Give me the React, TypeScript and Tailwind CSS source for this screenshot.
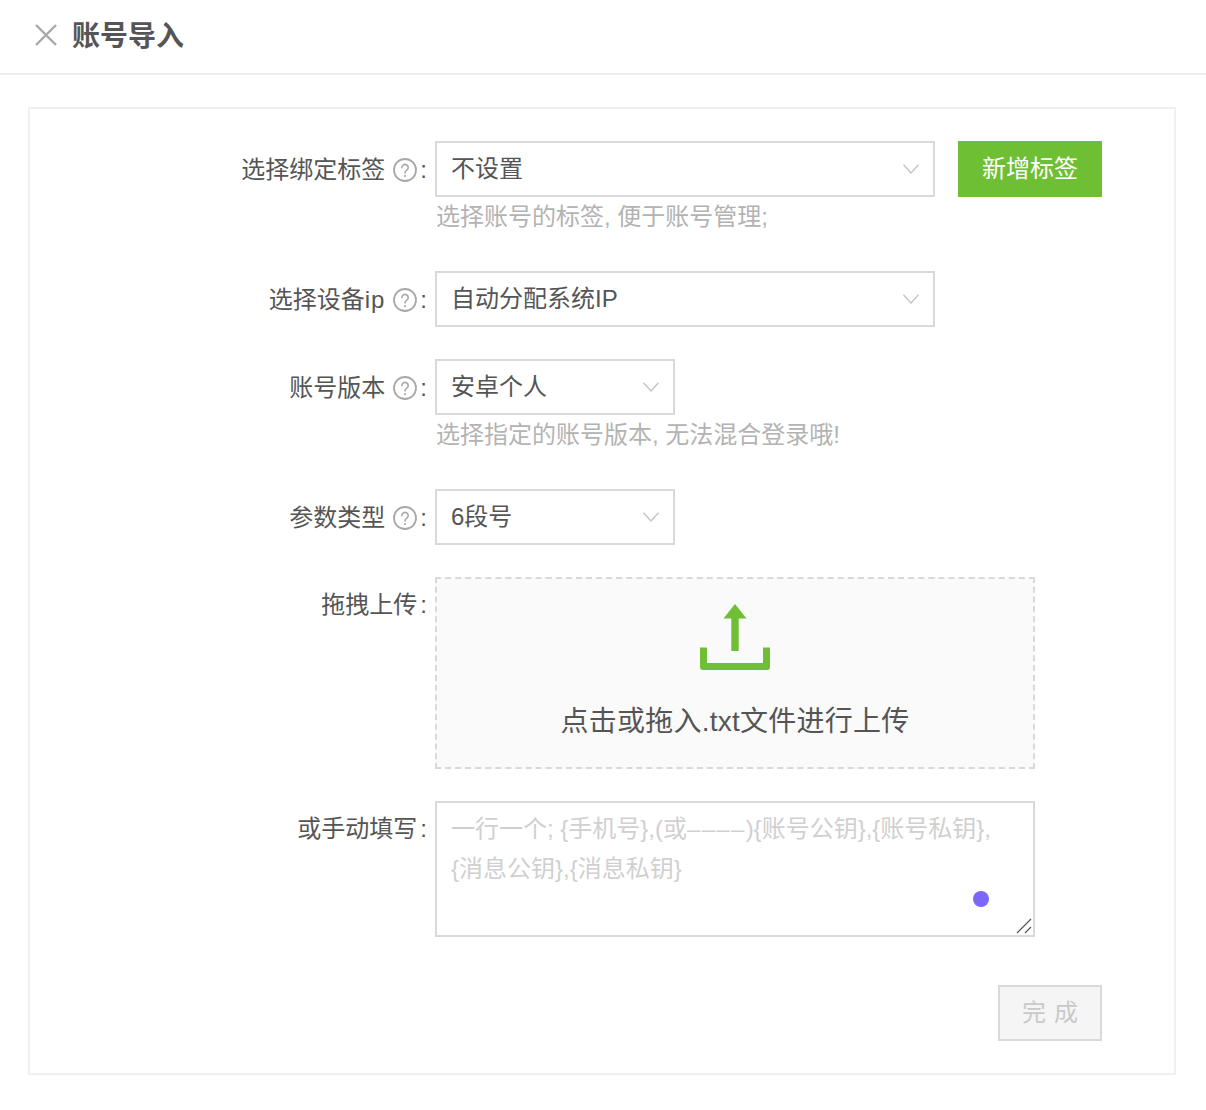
import { ReactNode } from "react"

const font = "[font-family:'Liberation_Sans','Noto_Sans_CJK_SC',sans-serif]"

function HelpIcon() {
  return (
    <svg className="ml-[8px] h-6 w-6" viewBox="0 0 24 24" fill="none">
      <circle cx="12" cy="12" r="11" stroke="#a8a8a8" strokeWidth="1.800" />
      <path d="M8.800 9.600a3.200 3.200 0 1 1 5 2.600c-1.100.8-1.800 1.300-1.800 2.800" stroke="#a8a8a8" strokeWidth="1.600" strokeLinecap="round" />
      <circle cx="12" cy="18" r="1.100" fill="#a8a8a8" />
    </svg>
  )
}

function Chevron() {
  return (
    <svg className="h-[10px] w-4" viewBox="0 0 16 10" fill="none">
      <path d="M.5.7 8 9l7.500-8.300" stroke="#c4c4c4" strokeWidth="1.400" />
    </svg>
  )
}

function Row({ label, help, children, className }: { label: ReactNode; help?: boolean; children: ReactNode; className: string }) {
  return (
    <div className={`flex ${className}`}>
      <div className={`flex h-14 w-[397px] shrink-0 items-center justify-end text-[24px] text-[#555555] ${help ? "pt-[1px]" : "pb-[1px]"}`}>
        <span>{label}</span>
        {help && <HelpIcon />}
        <span className="ml-[3px] leading-none">:</span>
      </div>
      <div className="ml-[8px]">{children}</div>
    </div>
  )
}

function Select({ value, wide }: { value: string; wide?: boolean }) {
  return (
    <div className={`flex h-14 items-center justify-between border-2 border-[#d9d9d9] bg-white px-[14px] text-[24px] text-[#555555] ${wide ? "w-[500px]" : "w-[240px]"}`}>
      <span>{value}</span>
      <Chevron />
    </div>
  )
}

function Hint({ children }: { children: ReactNode }) {
  return <p className="h-[34px] pt-[2px] pl-px text-[24px] leading-[36px] text-[#b3b3b3]">{children}</p>
}

export default function App() {
  return (
    <div className={`h-[1110px] w-[1206px] overflow-hidden bg-white ${font}`}>
      {/* Header */}
      <div className="flex h-[75px] items-center border-b-2 border-[#eeeeee] pb-[4px] pl-[35px]">
        <svg className="h-[22px] w-[22px]" viewBox="0 0 22 22" fill="none">
          <path d="M1 1l20 20M21 1 1 21" stroke="#a8a8a8" strokeWidth="2.400" />
        </svg>
        <h1 className="ml-[15px] pt-[4px] text-[28px] font-bold text-[#555555]">账号导入</h1>
      </div>

      {/* Form panel */}
      <div className="mt-[32px] ml-[28px] h-[968px] w-[1148px] border-2 border-[#f0f0f0] pt-[32px]">
        <Row label="选择绑定标签" help className="mb-[40px]">
          <div className="flex">
            <Select value="不设置" wide />
            <button className="ml-[23px] h-14 w-[144px] bg-[#6fbf35] text-[24px] text-white">新增标签</button>
          </div>
          <Hint>选择账号的标签, 便于账号管理;</Hint>
        </Row>

        <Row label={<>选择设备<span className="tracking-[1px]">ip</span></>} help className="mb-[32px]">
          <Select value="自动分配系统IP" wide />
        </Row>

        <Row label="账号版本" help className="mb-[40px]">
          <Select value="安卓个人" />
          <Hint>选择指定的账号版本, 无法混合登录哦!</Hint>
        </Row>

        <Row label="参数类型" help className="mb-[32px]">
          <Select value="6段号" />
        </Row>

        <Row label="拖拽上传" className="mb-[32px]">
          <div className="flex h-[192px] w-[600px] flex-col items-center border-2 border-dashed border-[#d9d9d9] bg-[#fafafa] pt-[25px]">
            <svg className="h-[66px] w-[70px]" viewBox="0 0 70 66" fill="none">
              <path d="M35 0l11.500 14.500h-7.800V47h-7.400V14.500h-7.800z" fill="#6fbf35" />
              <path d="M0 43.500h7v15.500h56V43.500h7v19.500a3 3 0 0 1-3 3H3a3 3 0 0 1-3-3z" fill="#6fbf35" />
            </svg>
            <p className="mt-[31px] text-[28px] tracking-[0.25px] text-[#555555]">点击或拖入.txt文件进行上传</p>
          </div>
        </Row>

        <Row label="或手动填写" className="mb-[48px]">
          <div className="relative h-[136px] w-[600px] border-2 border-[#d9d9d9] px-[14px] pt-[6px] text-[24px] leading-[40px] text-[#d0d0d0]">
            <p>一行一个; &#123;手机号&#125;,(或<span className="tracking-[1.3px]">––––</span>)&#123;账号公钥&#125;,&#123;账号私钥&#125;,</p>
            <p>&#123;消息公钥&#125;,&#123;消息私钥&#125;</p>
            <span className="absolute right-[44px] bottom-[28px] h-4 w-4 rounded-full bg-[#7b68fb]" />
            <svg className="absolute right-[1px] bottom-[1px] h-4 w-4" viewBox="0 0 16 16" fill="none">
              <path d="M1 15 15 1M9 15l6-6" stroke="#555555" strokeWidth="1.200" />
            </svg>
          </div>
        </Row>

        <div className="flex justify-end pr-[72px]">
          <button className="h-14 w-[104px] border-2 border-[#d9d9d9] bg-[#f5f5f5] pl-[8px] text-[24px] tracking-[8px] text-[#c9c9c9]">完成</button>
        </div>
      </div>
    </div>
  )
}
